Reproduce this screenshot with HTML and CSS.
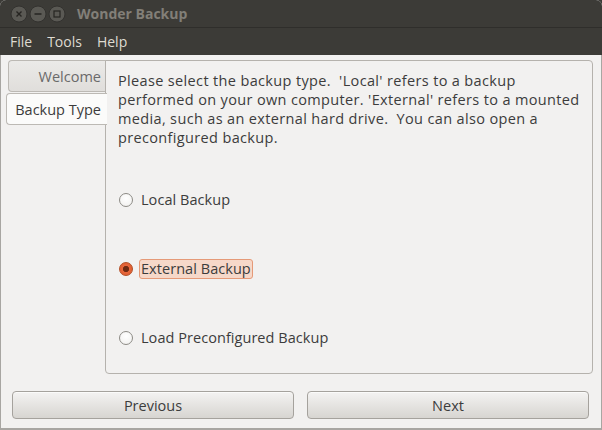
FILE: index.html
```html
<!DOCTYPE html>
<html>
<head>
<meta charset="utf-8">
<link rel="stylesheet" href="styles.css">
</head>
<body>
<div class="window">
  <div class="titlebar">
    <div class="wbtns">
      <span class="wbtn"><svg width="18" height="18" viewBox="0 0 18 18"><circle cx="9" cy="9" r="8" fill="#5a5954" stroke="#33322f" stroke-width="1"/><path d="M6.5 6.5 L11.5 11.5 M11.5 6.5 L6.5 11.5" stroke="#262522" stroke-width="1.4"/></svg></span>
      <span class="wbtn"><svg width="18" height="18" viewBox="0 0 18 18"><circle cx="9" cy="9" r="8" fill="#5a5954" stroke="#33322f" stroke-width="1"/><path d="M5.5 9 H12.5" stroke="#262522" stroke-width="1.4"/></svg></span>
      <span class="wbtn"><svg width="18" height="18" viewBox="0 0 18 18"><circle cx="9" cy="9" r="8" fill="#5a5954" stroke="#33322f" stroke-width="1"/><rect x="6" y="6" width="6" height="6" fill="none" stroke="#262522" stroke-width="1.2"/></svg></span>
    </div>
    <div class="title">Wonder Backup</div>
  </div>
  <div class="menubar">
    <span class="menu">File</span>
    <span class="menu">Tools</span>
    <span class="menu">Help</span>
  </div>
  <div class="content">
    <div class="notebook">
      <div class="tabs">
        <div class="tab">Welcome</div>
        <div class="tab active">Backup Type</div>
      </div>
      <div class="panel">
        <p class="intro">Please select the backup type.  'Local' refers to a backup<br>performed on your own computer. 'External' refers to a mounted<br>media, such as an external hard drive.  You can also open a<br>preconfigured backup.</p>
        <div class="options">
          <label class="opt"><span class="radio"></span><span class="lbl">Local Backup</span></label>
          <label class="opt"><span class="radio on"></span><span class="lbl focus">External Backup</span></label>
          <label class="opt"><span class="radio"></span><span class="lbl">Load Preconfigured Backup</span></label>
        </div>
      </div>
    </div>
    <div class="buttons">
      <div class="btn">Previous</div>
      <div class="btn">Next</div>
    </div>
  </div>
</div>
</body>
</html>
```
FILE: styles.css
```css
html, body {
  margin: 0;
  padding: 0;
  background: #3c3b37;
}
.window {
  width: 602px;
  height: 430px;
  display: flex;
  flex-direction: column;
  font-family: "Open Sans", "DejaVu Sans", sans-serif;
  color: #3c3c3c;
  background: #f2f1f0;
  border-radius: 6px 6px 0 0;
  overflow: hidden;
  box-sizing: border-box;
}
.titlebar {
  height: 28px;
  flex: none;
  background: #3c3b37;
  border-bottom: 1px solid #2f2e2b;
  box-sizing: border-box;
  display: flex;
  align-items: center;
  padding-left: 10px;
}
.wbtns {
  display: flex;
  gap: 1px;
  margin-top: 1px;
}
.wbtn svg { display: block; }
.title {
  margin-left: 11px;
  font-size: 14px;
  font-weight: bold;
  color: #827f78;
}
.menubar {
  height: 27px;
  flex: none;
  background: #3c3b37;
  display: flex;
  align-items: center;
  padding-left: 10px;
  gap: 15px;
}
.menu {
  color: #dfdbd2;
  font-size: 14px;
}
.content {
  flex: 1;
  display: flex;
  flex-direction: column;
  padding: 5px 12px 0 6px;
  border-left: 1px solid #a8a6a2;
  border-right: 1px solid #a8a6a2;
  border-bottom: 2px solid #a8a6a2;
}
.notebook {
  display: flex;
  height: 314px;
}
.tabs {
  width: 98px;
  flex: none;
  display: flex;
  flex-direction: column;
}
.tab {
  height: 32px;
  box-sizing: border-box;
  margin-left: 1px;
  margin-right: -1px;
  border: 1px solid #bcb9b4;
  border-right: none;
  border-radius: 4px 0 0 4px;
  background: linear-gradient(to bottom, #ebeae8, #e0dedb);
  color: #6a6a6a;
  font-size: 14.5px;
  display: flex;
  align-items: center;
  justify-content: flex-end;
  padding-right: 5px;
}
.tab.active {
  margin-top: 1px;
  margin-left: -1px;
  margin-right: -2px;
  background: #fbfbfa;
  color: #3c3c3c;
  position: relative;
  z-index: 1;
  padding-right: 6px;
}
.panel {
  flex: 1;
  border: 1px solid #b5b2ad;
  border-radius: 0 4px 4px 4px;
  background: #f2f1f0;
  padding: 10px 12px;
  box-sizing: border-box;
  display: flex;
  flex-direction: column;
}
.intro {
  margin: 0;
  font-size: 14.5px;
  letter-spacing: 0.35px;
  line-height: 19px;
  white-space: pre;
}
.options {
  display: flex;
  flex-direction: column;
  padding-top: 43px;
  gap: 49px;
}
.opt {
  display: flex;
  align-items: center;
  height: 20px;
  font-size: 14.5px;
  letter-spacing: 0.05px;
}
.radio {
  width: 14px;
  height: 14px;
  border-radius: 50%;
  box-sizing: border-box;
  border: 1px solid #8d8b86;
  background: radial-gradient(circle at 50% 35%, #ffffff, #f0efed);
  margin-left: 1px;
  margin-right: 6px;
}
.radio.on {
  border-color: #b44d24;
  background: radial-gradient(circle, #6e2a12 0 2.8px, #e8663a 3.4px, #d75a2d 100%);
}
.lbl {
  padding: 0 1px;
  border: 1px solid transparent;
  border-radius: 3px;
  line-height: 18px;
}
.lbl.focus {
  background: #f6d8c9;
  border-color: #e59a78;
}
.buttons {
  display: grid;
  grid-template-columns: 1fr 1fr;
  gap: 13px;
  margin-top: 17px;
  padding-left: 5px;
}
.btn {
  height: 28px;
  box-sizing: border-box;
  border: 1px solid #a5a29d;
  border-radius: 4px;
  background: linear-gradient(to bottom, #f4f3f2, #d7d5d1);
  box-shadow: inset 0 1px 0 #fbfbfa;
  display: flex;
  align-items: center;
  justify-content: center;
  font-size: 14.5px;
  color: #3c3c3c;
}
```
